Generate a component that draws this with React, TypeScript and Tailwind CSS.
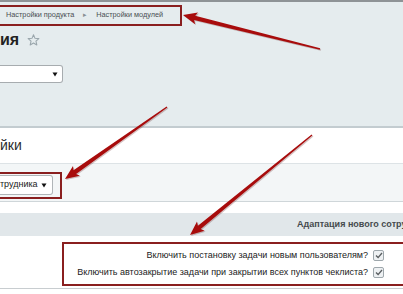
import React from 'react';

type Pt = [number, number];

// tapered annotation arrow: thin tail, fat head
function arrowPoints(tail: Pt, tip: Pt) {
  const dx = tip[0] - tail[0];
  const dy = tip[1] - tail[1];
  const len = Math.hypot(dx, dy);
  const ux = dx / len;
  const uy = dy / len;
  const nx = -uy;
  const ny = ux;
  const head = 12;
  const hw = 6;
  const bx = tip[0] - ux * head;
  const by = tip[1] - uy * head;
  const p = (x: number, y: number) => `${x.toFixed(1)},${y.toFixed(1)}`;
  return [
    p(tail[0] + nx * 0.7, tail[1] + ny * 0.7),
    p(bx + nx * 2.2, by + ny * 2.2),
    p(bx - ux * 2 + nx * hw, by - uy * 2 + ny * hw),
    p(tip[0], tip[1]),
    p(bx - ux * 2 - nx * hw, by - uy * 2 - ny * hw),
    p(bx - nx * 2.2, by - ny * 2.2),
    p(tail[0] - nx * 0.7, tail[1] - ny * 0.7),
  ].join(' ');
}

const arrows: { tail: Pt; tip: Pt }[] = [
  { tail: [320, 49], tip: [183, 15] },
  { tail: [167, 107], tip: [65, 179] },
  { tail: [312, 135], tip: [190, 235] },
];

function Caret() {
  return (
    <svg width="6" height="5" viewBox="0 0 6 5" className="shrink-0">
      <path d="M0.5 0.5 H5.5 L3 4.5 Z" fill="#111" />
    </svg>
  );
}

function Star() {
  return (
    <svg width="13" height="12" viewBox="0 0 24 23" className="shrink-0">
      <path
        d="M12 1.5 L14.9 8.3 L22.3 8.9 L16.7 13.8 L18.4 21 L12 17.2 L5.6 21 L7.3 13.8 L1.7 8.9 L9.1 8.3 Z"
        fill="none"
        stroke="#9aa6ac"
        strokeWidth="2"
        strokeLinejoin="round"
      />
    </svg>
  );
}

function CheckBox() {
  return (
    <div className="w-[11px] h-[11px] shrink-0 rounded-[2px] border border-[#9ea7ac] bg-[#eef1f3] flex items-center justify-center">
      <svg width="8" height="7" viewBox="0 0 8 7">
        <path d="M1 3.6 L3.1 5.6 L7 1" fill="none" stroke="#5a5f62" strokeWidth="1.4" />
      </svg>
    </div>
  );
}

export default function App() {
  return (
    <div className="relative w-[403px] h-[294px] overflow-hidden bg-white font-['Liberation_Sans',Arial,sans-serif]">
      <div className="h-[2px] bg-[#8e9396]" />

      {/* header */}
      <div className="h-[124px] bg-[#e5ecee] pt-[3px]">
        <div className="w-[182px] h-[21px] border-2 border-l-0 border-[#8a1f1f] flex items-center pl-[6px] text-[7.3px] text-[#4a4f52] whitespace-nowrap">
          <span>Настройки продукта</span>
          <span className="mx-[9px] text-[#8a9094] text-[7px]">▸</span>
          <span>Настройки модулей</span>
        </div>
        <div className="mt-[6px] h-[16px] flex items-center gap-[8px]">
          <span className="text-[16px] leading-none font-bold text-[#222]">ия</span>
          <Star />
        </div>
        <div className="mt-[17px] w-[63px] h-[18px] bg-white border border-l-0 border-[#a7acaf] rounded-r-[3px] flex items-center justify-end pr-[4px]">
          <Caret />
        </div>
      </div>

      <div className="h-[2px] bg-[#c3ccd0]" />
      <div className="h-[35px] bg-white flex items-center">
        <span className="text-[14px] text-[#2b2b2b]">йки</span>
      </div>
      <div className="h-px bg-[#dde3e6]" />

      <div className="h-[37px] bg-[#f3f6f7] pt-[8px]">
        <div className="w-[62px] h-[27px] border-2 border-l-0 border-[#8a1f1f] pt-px">
          <div className="w-[53px] h-[20px] bg-white border border-l-0 border-[#b0b5b8] rounded-r-[3px] flex items-center justify-between pr-[5px] text-[9px] text-[#222] whitespace-nowrap">
            <span>трудника</span>
            <Caret />
          </div>
        </div>
      </div>
      <div className="h-px bg-[#cfd6d9]" />

      <div className="h-[11px] bg-white" />
      <div className="h-[23px] bg-[#e1e7ea] flex items-center pl-[297px] whitespace-nowrap text-[9px] font-bold text-[#454a4d]">
        Адаптация нового сотрудника
      </div>

      <div className="pt-[6px]">
        <div className="ml-[62px] w-[341px] h-[44px] border-2 border-r-0 border-[#8a1f1f] pt-[3px] pr-[19px] text-[9px] text-[#222]">
          <div className="h-[17px] flex items-center justify-end gap-[5px] whitespace-nowrap">
            <span>Включить постановку задачи новым пользователям?</span>
            <CheckBox />
          </div>
          <div className="h-[17px] flex items-center justify-end gap-[5px] whitespace-nowrap">
            <span>Включить автозакрытие задачи при закрытии всех пунктов чеклиста?</span>
            <CheckBox />
          </div>
        </div>
        <div className="mt-[2px] h-px bg-[#c8cdd0]" />
      </div>

      {/* annotation arrows */}
      <svg className="absolute left-0 top-0 pointer-events-none" width="403" height="294">
        {arrows.map((a, i) => (
          <g key={i}>
            <polygon
              points={arrowPoints([a.tail[0] + 1, a.tail[1] + 1], [a.tip[0] + 1, a.tip[1] + 1])}
              fill="#5a1010"
              opacity="0.25"
            />
            <polygon points={arrowPoints(a.tail, a.tip)} fill="#a80c0c" />
          </g>
        ))}
      </svg>
    </div>
  );
}
